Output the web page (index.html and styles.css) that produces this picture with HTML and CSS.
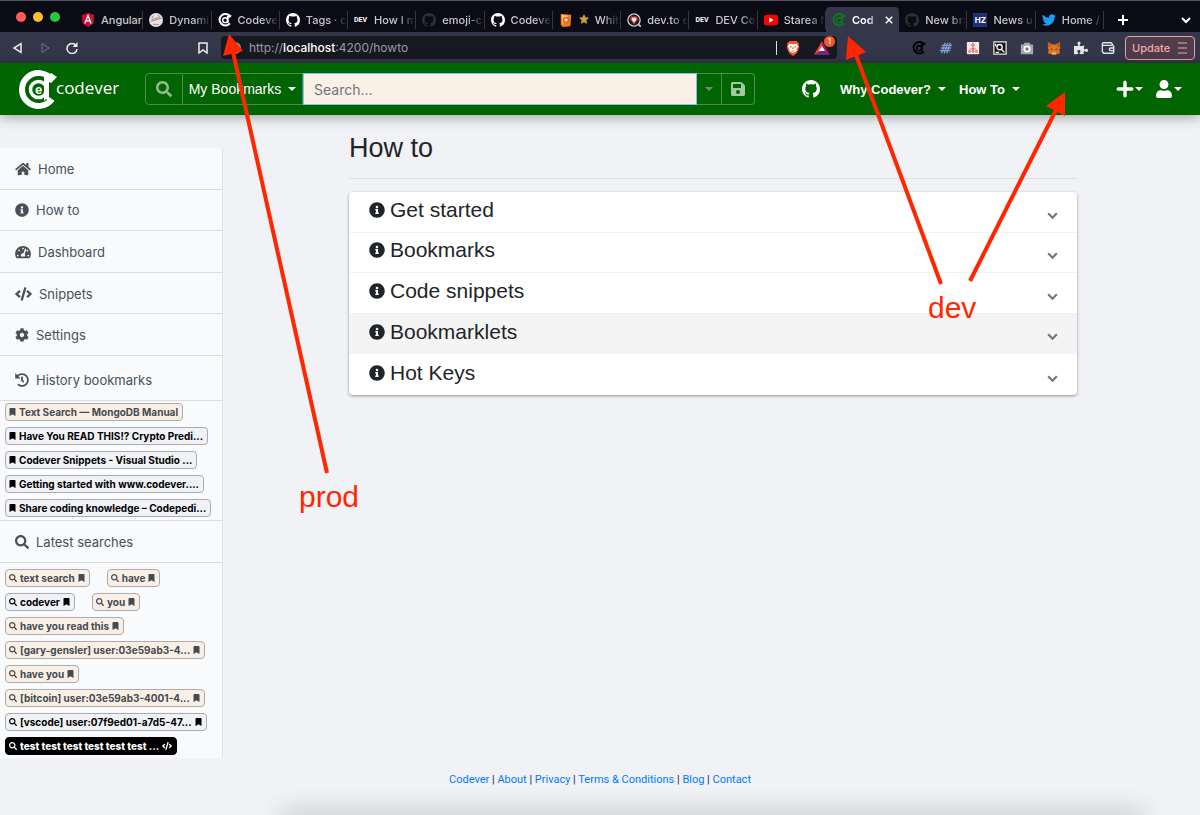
FILE: index.html
```html
<!DOCTYPE html>
<html lang="en">
<head>
<meta charset="utf-8">
<meta name="viewport" content="width=device-width, initial-scale=1">
<title>Codever - How to</title>
<link rel="stylesheet" href="styles.css">
</head>
<body>
<svg class="sprite" aria-hidden="true">
  <symbol id="home" viewBox="0 0 576 512"><path d="M280.37 148.26L96 300.11V464a16 16 0 0 0 16 16l112.06-.29a16 16 0 0 0 15.92-16V368a16 16 0 0 1 16-16h64a16 16 0 0 1 16 16v95.64a16 16 0 0 0 16 16.05L464 480a16 16 0 0 0 16-16V300L295.67 148.26a12.19 12.19 0 0 0-15.3 0zM571.6 251.47L488 182.56V44.05a12 12 0 0 0-12-12h-56a12 12 0 0 0-12 12v72.61L318.47 43a48 48 0 0 0-61 0L4.34 251.47a12 12 0 0 0-1.6 16.9l25.5 31A12 12 0 0 0 45.15 301l235.22-193.74a12.19 12.19 0 0 1 15.3 0L530.9 301a12 12 0 0 0 16.9-1.6l25.5-31a12 12 0 0 0-1.7-16.93z"/></symbol>
  <symbol id="info" viewBox="0 0 512 512"><path d="M256 8C119.043 8 8 119.083 8 256c0 136.997 111.043 248 248 248s248-111.003 248-248C504 119.083 392.957 8 256 8zm0 110c23.196 0 42 18.804 42 42s-18.804 42-42 42-42-18.804-42-42 18.804-42 42-42zm56 254c0 6.627-5.373 12-12 12h-88c-6.627 0-12-5.373-12-12v-24c0-6.627 5.373-12 12-12h12v-64h-12c-6.627 0-12-5.373-12-12v-24c0-6.627 5.373-12 12-12h64c6.627 0 12 5.373 12 12v100h12c6.627 0 12 5.373 12 12v24z"/></symbol>
  <symbol id="gauge" viewBox="0 0 576 512"><path fill-rule="evenodd" d="M288 32C129 32 0 161 0 320c0 53 14 102 39 145 6 9 16 15 27 15h444c11 0 21-6 27-15 25-43 39-92 39-145C576 161 447 32 288 32zM96 352a32 32 0 1 1 0 64 32 32 0 0 1 0-64zM144 160a32 32 0 1 1 0 64 32 32 0 0 1 0-64zM288 96a32 32 0 0 1 32 32c0 18-14 32-32 32a32 32 0 0 1 0-64zM365 128l46 14-62 190c12 12 19 30 19 52 0 12-3 22-8 32H216c-5-10-8-20-8-32 0-44 36-80 80-80 5 0 10 0 14 1zM448 176a32 32 0 1 1 0 64 32 32 0 0 1 0-64zM480 352a32 32 0 1 1 0 64 32 32 0 0 1 0-64z"/></symbol>
  <symbol id="code" viewBox="0 0 640 512"><path d="M278.9 511.5l-61-17.7c-6.4-1.8-10-8.5-8.2-14.9L346.2 8.7c1.8-6.4 8.5-10 14.9-8.2l61 17.7c6.4 1.8 10 8.5 8.2 14.9L293.8 503.3c-1.9 6.4-8.5 10.1-14.9 8.2zm-114-112.2l43.5-46.4c4.6-4.9 4.3-12.7-.8-17.2L117 256l90.6-79.7c5.1-4.5 5.5-12.3.8-17.2l-43.5-46.4c-4.5-4.8-12.1-5.1-17-.5L3.8 247.2c-5.1 4.7-5.1 12.8 0 17.5l144.1 135.1c4.9 4.6 12.5 4.4 17-.5zm327.2.6l144.1-135.1c5.1-4.7 5.1-12.8 0-17.5L492.1 112.1c-4.8-4.5-12.4-4.3-17 .5L431.6 159c-4.6 4.9-4.3 12.7.8 17.2L523 256l-90.6 79.7c-5.1 4.5-5.5 12.3-.8 17.2l43.5 46.4c4.5 4.9 12.1 5.1 17 .6z"/></symbol>
  <symbol id="cog" viewBox="0 0 512 512"><path d="M487.4 315.7l-42.6-24.6c4.3-23.2 4.3-47 0-70.2l42.6-24.6c4.9-2.8 7.1-8.6 5.5-14-11.1-35.6-30-67.8-54.7-94.6-3.8-4.1-10-5.1-14.8-2.3L380.8 110c-17.9-15.4-38.5-27.3-60.8-35.1V25.8c0-5.6-3.9-10.5-9.4-11.7-36.7-8.2-74.3-7.8-109.2 0-5.5 1.2-9.4 6.1-9.4 11.7V75c-22.2 7.9-42.8 19.8-60.8 35.1L88.7 85.5c-4.9-2.8-11-1.9-14.8 2.3-24.7 26.7-43.6 58.9-54.7 94.6-1.7 5.4.6 11.2 5.5 14L67.3 221c-4.3 23.2-4.3 47 0 70.2l-42.6 24.6c-4.9 2.8-7.1 8.6-5.5 14 11.1 35.6 30 67.8 54.7 94.6 3.8 4.1 10 5.1 14.8 2.3l42.6-24.6c17.9 15.4 38.5 27.3 60.8 35.1v49.2c0 5.6 3.9 10.5 9.4 11.7 36.7 8.2 74.3 7.8 109.2 0 5.5-1.2 9.4-6.1 9.4-11.7v-49.2c22.2-7.9 42.8-19.8 60.8-35.1l42.6 24.6c4.9 2.8 11 1.9 14.8-2.3 24.7-26.7 43.6-58.9 54.7-94.6 1.5-5.5-.7-11.3-5.6-14.1zM256 336c-44.1 0-80-35.9-80-80s35.9-80 80-80 80 35.9 80 80-35.9 80-80 80z"/></symbol>
  <symbol id="history" viewBox="0 0 512 512"><path d="M504 255.531c.253 136.64-111.18 248.372-247.82 248.468-59.015.042-113.223-20.53-155.822-54.911-11.077-8.94-11.905-25.541-1.839-35.607l11.267-11.267c8.609-8.609 22.353-9.551 31.891-1.984C173.062 425.135 212.781 440 256 440c101.705 0 184-82.311 184-184 0-101.705-82.311-184-184-184-48.814 0-93.149 18.969-126.068 49.932l50.754 50.754c10.08 10.08 2.941 27.314-11.313 27.314H24c-8.837 0-16-7.163-16-16V38.627c0-14.254 17.234-21.393 27.314-11.314l49.372 49.372C129.209 34.136 189.552 8 256 8c136.81 0 247.747 110.78 248 247.531zm-180.912 78.784l9.823-12.63c8.138-10.463 6.253-25.542-4.21-33.679L288 256.349V152c0-13.255-10.745-24-24-24h-16c-13.255 0-24 10.745-24 24v135.651l65.409 50.874c10.463 8.137 25.541 6.253 33.679-4.21z"/></symbol>
  <symbol id="search" viewBox="0 0 512 512"><path d="M505 442.7L405.3 343c-4.5-4.5-10.6-7-17-7H372c27.6-35.3 44-79.7 44-128C416 93.1 322.9 0 208 0S0 93.1 0 208s93.1 208 208 208c48.3 0 92.7-16.4 128-44v16.3c0 6.4 2.5 12.5 7 17l99.7 99.7c9.4 9.4 24.6 9.4 33.9 0l28.3-28.3c9.4-9.4 9.4-24.6.1-34zM208 336c-70.7 0-128-57.2-128-128 0-70.7 57.2-128 128-128 70.7 0 128 57.2 128 128 0 70.7-57.2 128-128 128z"/></symbol>
  <symbol id="bookmark" viewBox="0 0 384 512"><path d="M0 512V48C0 21.5 21.5 0 48 0h288c26.5 0 48 21.5 48 48v464L192 400z"/></symbol>
  <symbol id="save" viewBox="0 0 448 512"><path d="M433.941 129.941l-83.882-83.882A48 48 0 0 0 316.118 32H48C21.49 32 0 53.49 0 80v352c0 26.51 21.49 48 48 48h352c26.51 0 48-21.49 48-48V163.882a48 48 0 0 0-14.059-33.941zM224 416c-35.346 0-64-28.654-64-64 0-35.346 28.654-64 64-64s64 28.654 64 64c0 35.346-28.654 64-64 64zm96-304.52V212c0 6.627-5.373 12-12 12H76c-6.627 0-12-5.373-12-12V108c0-6.627 5.373-12 12-12h228.52c3.183 0 6.235 1.264 8.485 3.515l3.48 3.48A11.996 11.996 0 0 1 320 111.48z"/></symbol>
  <symbol id="plus" viewBox="0 0 16 16"><path d="M8 2v12M2 8h12" fill="none" stroke="currentColor" stroke-width="3" stroke-linecap="round"/></symbol>
  <symbol id="user" viewBox="0 0 448 512"><path d="M224 256c70.7 0 128-57.3 128-128S294.7 0 224 0 96 57.3 96 128s57.3 128 128 128zm89.6 32h-16.7c-22.2 10.2-46.9 16-72.9 16s-50.6-5.8-72.9-16h-16.7C60.2 288 0 348.2 0 422.4V464c0 26.5 21.5 48 48 48h352c26.5 0 48-21.5 48-48v-41.6c0-74.2-60.2-134.4-134.4-134.4z"/></symbol>
  <symbol id="github" viewBox="0 0 16 16"><path d="M8 0C3.58 0 0 3.58 0 8c0 3.54 2.29 6.53 5.47 7.59.4.07.55-.17.55-.38 0-.19-.01-.82-.01-1.49-2.01.37-2.53-.49-2.69-.94-.09-.23-.48-.94-.82-1.13-.28-.15-.68-.52-.01-.53.63-.01 1.08.58 1.23.82.72 1.21 1.87.87 2.33.66.07-.52.28-.87.51-1.07-1.78-.2-3.64-.89-3.64-3.95 0-.87.31-1.59.82-2.15-.08-.2-.36-1.02.08-2.12 0 0 .67-.21 2.2.82.64-.18 1.32-.27 2-.27s1.36.09 2 .27c1.53-1.04 2.2-.82 2.2-.82.44 1.1.16 1.92.08 2.12.51.56.82 1.27.82 2.15 0 3.07-1.87 3.75-3.65 3.95.29.25.54.73.54 1.48 0 1.07-.01 1.93-.01 2.2 0 .21.15.46.55.38A8.01 8.01 0 0 0 16 8c0-4.42-3.58-8-8-8z"/></symbol>
  <symbol id="cd" viewBox="0 0 40 40"><g fill="none" stroke="currentColor"><path d="M35 10.5A16.500 16.500 0 1 0 34 29.500" stroke-width="6"/><circle cx="20.500" cy="20.500" r="7" stroke-width="4"/><path d="M28 8v21" stroke-width="5"/></g><path d="M27 10l7-6 5 4-6 6z"/></symbol>
  <symbol id="chevron" viewBox="0 0 12 12"><path d="M2 4l4 4 4-4" fill="none" stroke="currentColor" stroke-width="2"/></symbol>
  <symbol id="lion" viewBox="0 0 16 18"><path fill="#fb542b" d="M4 1h8l3 3-.5 2 .8 2-3 7L8 18l-4.300-3-3-7 .8-2L1 4z"/><path fill="#fff" d="M4 4l4 .8L12 4l2 3-2 3 .5 2L8 15l-4.500-3L4 10 2 7z"/><path fill="#fb542b" d="M4 6.500l3 1-1.500 1.500zM12 6.500l-3 1 1.500 1.500zM7.300 8h1.400v2.500h-1.400zM5.500 11.500L8 12.500l2.500-1L8 13.500z"/></symbol>
</svg>

<header class="browser">
  <div class="tabstrip">
    <div class="lights"><i class="light light-close"></i><i class="light light-min"></i><i class="light light-max"></i></div>
    <ul class="tabs">
      <li class="tab"><svg class="fav" viewBox="0 0 16 16"><path fill="#dd0031" d="M8 0l7 2.500-1 9.500-6 4-6-4-1-9.500z"/><path fill="#b5202c" d="M8 0l7 2.500-1 9.500-6 4z"/><path fill="none" stroke="#fff" stroke-width="1.500" d="M4.500 12L8 3l3.500 9M6 9h4"/></svg><span class="tab-name">Angular</span></li>
      <li class="tab"><svg class="fav" viewBox="0 0 16 16"><circle cx="8" cy="8" r="8" fill="#e4e4e4"/><path d="M2 9.500l12-3.500M3 6l2-3M10 2.500l3 2M5 13h6" stroke="#c0645b" fill="none"/><path d="M3 7.500l9-2.500" stroke="#888"/></svg><span class="tab-name">Dynami</span></li>
      <li class="tab"><svg class="fav white"><use href="#cd"/></svg><span class="tab-name">Codeve</span></li>
      <li class="tab"><svg class="fav white"><use href="#github"/></svg><span class="tab-name">Tags · c</span></li>
      <li class="tab"><b class="fav dev">DEV</b><span class="tab-name">How I m</span></li>
      <li class="tab"><svg class="fav dim"><use href="#github"/></svg><span class="tab-name">emoji-c</span></li>
      <li class="tab"><svg class="fav white"><use href="#github"/></svg><span class="tab-name">Codeve</span></li>
      <li class="tab"><svg class="fav" viewBox="0 0 16 16"><path fill="#ef7d22" d="M2 1l12 1-1 13-9 1-2-3z"/><path fill="#ffc45c" d="M3 2l8 1-5 4-2 7z"/><circle cx="8" cy="8" r="3.500" fill="#e9501e"/><circle cx="8" cy="8" r="2" fill="#fff0c0"/></svg><span class="tab-name"><svg class="star" viewBox="0 0 16 16"><path d="M8 0l2.400 5.300 5.600.7-4.200 3.800L13 16l-5-3-5 3 1.200-6.200L0 6l5.600-.7z"/></svg> Whit</span></li>
      <li class="tab"><svg class="fav" viewBox="0 0 16 16"><circle cx="8" cy="8" r="7" fill="#17171f" stroke="#ccc" stroke-width="1.500"/><path d="M13 13l3 3" stroke="#ccc" stroke-width="2"/><path fill="#e74430" d="M4.500 4h7l.8 3L8 13 3.700 7z"/><path fill="#fff" d="M6 5.500h4L10.500 8 8 10.500 5.500 8z"/></svg><span class="tab-name">dev.to e</span></li>
      <li class="tab"><b class="fav dev">DEV</b><span class="tab-name">DEV Co</span></li>
      <li class="tab"><svg class="fav" viewBox="0 0 16 16"><rect y="2" width="16" height="12" rx="3" fill="#f00"/><path fill="#fff" d="M6 5l5 3-5 3z"/></svg><span class="tab-name">Starea N</span></li>
      <li class="tab tab-active"><svg class="fav green"><use href="#cd"/></svg><span class="tab-name">Cod</span><button class="tab-close" aria-label="Close tab"><svg viewBox="0 0 10 10"><path d="M1 1l8 8M9 1L1 9" stroke="currentColor" stroke-width="2"/></svg></button></li>
      <li class="tab"><svg class="fav dim"><use href="#github"/></svg><span class="tab-name">New bra</span></li>
      <li class="tab"><b class="fav hz">HZ</b><span class="tab-name">News u</span></li>
      <li class="tab"><svg class="fav" viewBox="0 0 24 24"><path fill="#1d9bf0" d="M23.950 4.570a10 10 0 0 1-2.820.77 4.960 4.960 0 0 0 2.160-2.720 9.900 9.900 0 0 1-3.120 1.190 4.920 4.920 0 0 0-8.390 4.480A13.930 13.930 0 0 1 1.640 3.160a4.920 4.920 0 0 0 1.520 6.570 4.900 4.900 0 0 1-2.230-.62v.06a4.920 4.920 0 0 0 3.950 4.830 4.900 4.900 0 0 1-2.210.08 4.940 4.940 0 0 0 4.600 3.420A9.870 9.870 0 0 1 0 19.540a13.940 13.940 0 0 0 7.550 2.210c9.050 0 14-7.500 14-13.980 0-.21 0-.42-.02-.63a9.940 9.940 0 0 0 2.420-2.570z"/></svg><span class="tab-name">Home /</span></li>
    </ul>
    <div class="tab-actions">
      <button aria-label="New tab"><svg class="i12" viewBox="0 0 12 12"><path d="M6 1v10M1 6h10" stroke="currentColor" stroke-width="2"/></svg></button>
      <button aria-label="List tabs"><svg class="i12"><use href="#chevron"/></svg></button>
    </div>
  </div>

  <div class="toolbar">
    <div class="history-buttons">
      <button aria-label="Back"><svg class="i12" viewBox="0 0 12 12"><path d="M9 1.500v9L2 6z" fill="none" stroke="currentColor" stroke-width="1.500"/></svg></button>
      <button class="off" aria-label="Forward"><svg class="i12" viewBox="0 0 12 12"><path d="M3 1.500v9L10 6z" fill="none" stroke="currentColor"/></svg></button>
      <button aria-label="Reload"><svg class="i12" viewBox="0 0 12 12"><path d="M10 3.500A5 5 0 1 0 11 7" fill="none" stroke="currentColor" stroke-width="1.500"/><path d="M11.500 0v5h-5z" fill="currentColor"/></svg></button>
    </div>
    <button aria-label="Bookmark page"><svg class="i12" viewBox="0 0 12 12"><path d="M2 1h8v10L6 8l-4 3z" fill="none" stroke="currentColor" stroke-width="1.500"/></svg></button>
    <div class="address">
      <svg class="globe" viewBox="0 0 12 12"><circle cx="6" cy="6" r="6"/></svg>
      <span class="url">http://<b>localhost</b>:4200/howto</span>
      <i class="bar"></i>
      <svg class="shield"><use href="#lion"/></svg>
      <span class="bat"><svg class="i16" viewBox="0 0 16 16"><path fill="#ff4724" d="M8 1L0 15l8-4z"/><path fill="#9e1f63" d="M8 1l8 14-8-4z"/><path fill="#662d91" d="M0 15h16l-8-5z"/><path fill="#fff" d="M8 6l3 5H5z"/></svg><em>1</em></span>
    </div>
    <div class="extensions">
      <svg class="i14 black"><use href="#cd"/></svg>
      <svg class="i14" viewBox="0 0 16 16"><path d="M7 2L3 14M10 2L6 14M13 2L9 14M3 5h12M2 8h12M1 11h12" stroke="#7ea0d8" stroke-width="1.500" fill="none"/></svg>
      <svg class="i14" viewBox="0 0 16 16"><rect x="1" y="1" width="14" height="14" rx="1" fill="#f6e9e9"/><g fill="none" stroke="#e8433f"><circle cx="8" cy="4.500" r="1.500"/><path d="M8 6v5M4 11c0-3 8-3 8 0"/><circle cx="4" cy="12" r="1"/><circle cx="8" cy="12" r="1"/><circle cx="12" cy="12" r="1"/></g></svg>
      <svg class="i14" viewBox="0 0 16 16"><rect x="1" y="1" width="14" height="14" fill="#15151c" stroke="#ddd" stroke-width="1.500"/><circle cx="7.500" cy="7" r="3" fill="none" stroke="#fff" stroke-width="1.500"/><path d="M10 10l3 3M3 13h4M3 3v3" stroke="#fff" stroke-width="1.500"/></svg>
      <svg class="i14" viewBox="0 0 16 16"><path fill="#a6a8a9" d="M1 4h3l1-2h6l1 2h3v11H1z"/><circle cx="8" cy="9" r="3" fill="#777" stroke="#fff" stroke-width="2"/></svg>
      <svg class="i14" viewBox="0 0 16 16"><path fill="#e2761b" d="M1 1l5 3h4l5-3v7l-1 2 1 4-4 1-1 1H6l-1-1-4-1 1-4-1-2z"/><path fill="#b5551a" d="M1 1l4 5-3 1zM15 1l-4 5 3 1z"/><path fill="#d9c6b2" d="M6 13h4v2H6z"/><path fill="#233447" d="M4 8l3 2H5zM12 8l-3 2h2z"/></svg>
      <svg class="i14 pale" viewBox="0 0 576 512"><path d="M519.442 288.651c-41.519 0-59.500 31.593-82.058 31.593C377.409 320.244 432 144 432 144s-196.288 80-196.288-3.297c0-35.827 36.288-46.250 36.288-85.985C272 19.216 243.885 0 210.539 0c-34.654 0-66.366 18.891-66.366 56.346 0 41.364 31.711 59.277 31.711 81.750C175.885 207.719 0 166.758 0 166.758v333.237s178.635 41.047 178.635-28.662c0-22.473-40-40.107-40-81.471 0-37.456 29.250-56.346 63.577-56.346 33.673 0 61.788 19.216 61.788 54.717 0 39.735-36.288 50.158-36.288 85.985 0 60.803 129.675 25.730 181.230 25.730 0 0-34.725-120.101 25.827-120.101 35.962 0 46.423 36.152 86.308 36.152C556.712 416 576 387.990 576 354.443c0-34.199-18.962-65.792-56.558-65.792z"/></svg>
      <svg class="i14" viewBox="0 0 16 16"><g fill="none" stroke="#e6e6ea" stroke-width="1.500"><path d="M13 5V3.500L11.500 2H3a1.500 1.500 0 0 0 0 3h10.500l1 1v7l-1 1H3L1.500 12V3"/><path d="M15 8h-4a1.500 1.500 0 0 0 0 3h4"/></g></svg>
    </div>
    <button class="update">Update<svg class="i12" viewBox="0 0 12 12"><path d="M2 1h9M2 6h9M2 11h9" stroke="currentColor" stroke-width="1"/></svg></button>
  </div>
</header>

<nav class="navbar">
  <a class="brand" href="#"><svg class="logo" viewBox="0 0 40 40"><g fill="none" stroke="currentColor"><path d="M34 11A16.500 16.500 0 1 0 34 30" stroke-width="6"/><circle cx="20.500" cy="20.500" r="8" stroke-width="3.500"/><path d="M28.500 7v21" stroke-width="5"/></g><path d="M26 10l7-6 6 4-6 6zM26 27h5v5l-3-2-2 2z"/><text x="20.500" y="25" text-anchor="middle">e</text></svg><span>codever</span></a>
  <form class="searchbox">
    <button class="addon" type="button" aria-label="Search"><svg class="i16"><use href="#search"/></svg></button>
    <button class="scope" type="button">My Bookmarks<i class="caret"></i></button>
    <input type="search" placeholder="Search..." aria-label="Search bookmarks">
    <button class="drop" type="button" aria-label="Search options"><i class="caret"></i></button>
    <button class="addon-end" type="button" aria-label="Save search"><svg class="i14"><use href="#save"/></svg></button>
  </form>
  <div class="links">
    <a href="#" aria-label="GitHub"><svg class="i18"><use href="#github"/></svg></a>
    <a href="#">Why Codever?<i class="caret"></i></a>
    <a href="#">How To<i class="caret"></i></a>
  </div>
  <div class="account">
    <button aria-label="Add"><svg class="i18"><use href="#plus"/></svg><i class="caret"></i></button>
    <button aria-label="Account"><svg class="i18"><use href="#user"/></svg><i class="caret"></i></button>
  </div>
</nav>

<div class="layout">
  <aside class="sidebar">
    <nav class="menu">
      <a href="#"><svg class="wide"><use href="#home"/></svg>Home</a>
      <a href="#"><svg><use href="#info"/></svg>How to</a>
      <a href="#"><svg class="wide"><use href="#gauge"/></svg>Dashboard</a>
      <a href="#"><svg class="wider"><use href="#code"/></svg>Snippets</a>
      <a href="#"><svg><use href="#cog"/></svg>Settings</a>
    </nav>
    <h2 class="side-title side-title-tall"><svg><use href="#history"/></svg>History bookmarks</h2>
    <div class="badges">
      <a class="badge visited" href="#"><svg><use href="#bookmark"/></svg>Text Search — MongoDB Manual</a>
      <a class="badge" href="#"><svg><use href="#bookmark"/></svg>Have You READ THIS!? Crypto Predi...</a>
      <a class="badge" href="#"><svg><use href="#bookmark"/></svg>Codever Snippets - Visual Studio ...</a>
      <a class="badge" href="#"><svg><use href="#bookmark"/></svg>Getting started with www.codever....</a>
      <a class="badge" href="#"><svg><use href="#bookmark"/></svg>Share coding knowledge – Codepedi...</a>
    </div>
    <h2 class="side-title"><svg><use href="#search"/></svg>Latest searches</h2>
    <div class="badges searches">
      <a class="badge visited" href="#"><svg><use href="#search"/></svg>text search<svg><use href="#bookmark"/></svg></a>
      <a class="badge visited" href="#"><svg><use href="#search"/></svg>have<svg><use href="#bookmark"/></svg></a>
      <a class="badge" href="#"><svg><use href="#search"/></svg>codever<svg><use href="#bookmark"/></svg></a>
      <a class="badge visited" href="#"><svg><use href="#search"/></svg>you<svg><use href="#bookmark"/></svg></a>
      <a class="badge visited" href="#"><svg><use href="#search"/></svg>have you read this<svg><use href="#bookmark"/></svg></a>
      <a class="badge visited" href="#"><svg><use href="#search"/></svg>[gary-gensler] user:03e59ab3-4...<svg><use href="#bookmark"/></svg></a>
      <a class="badge visited" href="#"><svg><use href="#search"/></svg>have you<svg><use href="#bookmark"/></svg></a>
      <a class="badge visited" href="#"><svg><use href="#search"/></svg>[bitcoin] user:03e59ab3-4001-4...<svg><use href="#bookmark"/></svg></a>
      <a class="badge" href="#"><svg><use href="#search"/></svg>[vscode] user:07f9ed01-a7d5-47...<svg><use href="#bookmark"/></svg></a>
      <a class="badge dark" href="#"><svg><use href="#search"/></svg>test test test test test test ...<svg class="codeicon"><use href="#code"/></svg></a>
    </div>
  </aside>
  <main class="content">
    <h1>How to</h1>
    <div class="accordion">
      <button><svg class="i16"><use href="#info"/></svg><span>Get started</span><svg class="arrow"><use href="#chevron"/></svg></button>
      <button><svg class="i16"><use href="#info"/></svg><span>Bookmarks</span><svg class="arrow"><use href="#chevron"/></svg></button>
      <button><svg class="i16"><use href="#info"/></svg><span>Code snippets</span><svg class="arrow"><use href="#chevron"/></svg></button>
      <button class="hovered"><svg class="i16"><use href="#info"/></svg><span>Bookmarklets</span><svg class="arrow"><use href="#chevron"/></svg></button>
      <button><svg class="i16"><use href="#info"/></svg><span>Hot Keys</span><svg class="arrow"><use href="#chevron"/></svg></button>
    </div>
  </main>
</div>

<footer class="footer"><a href="#">Codever</a> | <a href="#">About</a> | <a href="#">Privacy</a> | <a href="#">Terms &amp; Conditions</a> | <a href="#">Blog</a> | <a href="#">Contact</a></footer>
<div class="edge-shadow"></div>

<svg class="annotations" aria-label="prod and dev annotations">
  <g stroke-width="4"><path d="M327 473L233 52"/><path d="M941 284L856 55"/><path d="M970 281L1056 110"/></g>
  <path d="M229 34l14 17-20 5zM848 36l18 16-20 8zM1065 92v24l-19-10z"/>
  <text x="299" y="507">prod</text>
  <text x="928" y="318">dev</text>
</svg>
</body>
</html>
```
FILE: styles.css
```css
* { box-sizing: border-box; }

body {
  margin: 0;
  min-height: 100vh;
  position: relative;
  overflow: hidden;
  display: flex;
  flex-direction: column;
  background: #f0f2f6;
  color: #212529;
  font-family: Inter, "Liberation Sans", sans-serif;
}

button {
  margin: 0;
  padding: 0;
  border: 0;
  background: none;
  color: inherit;
  font: inherit;
  cursor: pointer;
}

a { color: inherit; text-decoration: none; }
svg { display: block; flex: none; fill: currentColor; }

.sprite { position: absolute; width: 0; height: 0; }
.i12 { width: 12px; height: 12px; }
.i14 { width: 14px; height: 16px; }
.i16 { width: 16px; height: 16px; }
.i18 { width: 18px; height: 18px; }
.black { color: #000; }
.pale { color: #e6e6ea; }

/* Browser chrome */
.tabstrip {
  display: flex;
  align-items: flex-end;
  height: 32px;
  border-top: 1px solid #55565e;
  background: #0b0b15;
  color: #c9c9cd;
}

.lights { display: flex; gap: 7px; width: 75px; padding: 0 0 10px 16px; }
.light { width: 10px; height: 10px; border-radius: 50%; }
.light-close { background: #ff5f57; }
.light-min { background: #febc2e; }
.light-max { background: #28c840; }

.tabs {
  display: flex;
  flex: 1;
  min-width: 0;
  height: 25px;
  margin: 0;
  padding: 0;
  list-style: none;
}

.tab {
  display: flex;
  flex: 1 1 0;
  align-items: center;
  gap: 6px;
  min-width: 0;
  padding: 0 1px 0 6px;
  background: linear-gradient(#38383c, #38383c) right center / 1px 18px no-repeat;
  font-size: 11px;
  font-weight: 500;
}

.tab-active { padding-right: 6px; border-radius: 4px 4px 0 0; background: #34364a; color: #fff; font-weight: 600; }
.tab-name {
  flex: 1;
  min-width: 0;
  overflow: hidden;
  white-space: nowrap;
  -webkit-mask-image: linear-gradient(90deg, #000 60%, transparent);
  mask-image: linear-gradient(90deg, #000 60%, transparent);
}
.tab:first-child .tab-name { -webkit-mask-image: none; mask-image: none; }
.tab-close { width: 8px; height: 8px; }
.tab-close svg { width: 8px; height: 8px; }
.fav { flex: none; width: 14px; height: 14px; }
.white { color: #fff; }
.dim { color: #2b2f36; }
.green { color: #0a7a1d; }
.dev { color: #fff; font: 700 7px/14px Roboto, sans-serif; }
.hz { background: #1f2f7a; color: #fff; font: 700 8px/14px Inter, sans-serif; text-align: center; }
.star { display: inline-block; width: 10px; height: 10px; margin-right: 3px; color: #c7a334; }

.tab-actions {
  display: flex;
  justify-content: space-between;
  width: 96px;
  padding: 0 8px 6px 13px;
  color: #fff;
}

.toolbar {
  display: flex;
  align-items: center;
  height: 31px;
  padding: 0 5px 0 12px;
  background: #34364a;
  color: #eee;
}

.history-buttons { display: flex; gap: 15px; width: 185px; }
.off { color: #72748a; }

.address {
  display: flex;
  flex: 1;
  align-items: center;
  height: 23px;
  margin-left: 12px;
  padding: 0 2px 0 8px;
  border-radius: 4px;
  background: #171920;
  color: #9a9ba3;
  font-size: 12px;
}
.globe { width: 12px; height: 12px; color: #8c8d96; }
.url { margin-left: 8px; white-space: nowrap; }
.url b { color: #fff; font-weight: 500; }
.bar { width: 1px; height: 14px; margin-left: auto; background: #ddd; }
.shield { width: 14px; height: 16px; margin: 0 14px 0 9px; }
.bat { display: flex; position: relative; width: 21px; }
.bat em {
  position: absolute;
  top: -4px;
  right: 0;
  width: 11px;
  height: 11px;
  border-radius: 50%;
  background: #fb542b;
  color: #fff;
  font: 500 8px/11px Inter, sans-serif;
  text-align: center;
}

.extensions { display: flex; gap: 13px; margin: 0 10px 0 75px; }
.update {
  display: flex;
  align-items: center;
  justify-content: space-between;
  width: 70px;
  height: 24px;
  padding: 0 6px;
  border: 1px solid #f0a0a0;
  border-radius: 4px;
  background: #4e3d4d;
  color: #f5a5a5;
  font-size: 11px;
  font-weight: 500;
}

/* Site header */
.navbar {
  display: flex;
  align-items: center;
  position: relative;
  height: 52px;
  padding: 0 18px;
  background: #006400;
  box-shadow: 0 2px 12px rgba(0, 0, 0, 0.35);
  color: #fff;
  font-size: 14px;
}

.brand { display: flex; align-items: center; width: 127px; font-size: 17px; }
.brand span { margin-left: -2px; padding-bottom: 4px; font-family: "Open Sans", sans-serif; font-weight: 500; }
.logo { width: 40px; height: 40px; }
.logo text { font: 700 13px "Liberation Sans", sans-serif; }

.caret {
  display: inline-block;
  border: 4px solid transparent;
  border-top-color: currentColor;
  border-bottom: 0;
}

.searchbox { display: flex; flex: 1; max-width: 610px; height: 32px; }
.searchbox > * { border: 1px solid #4e8a4e; border-left-width: 0; }
.addon { display: grid; place-items: center; width: 38px; border-left-width: 1px; border-radius: 4px 0 0 4px; color: #8fbc8f; }
.scope { width: 120px; font-family: "Liberation Sans", sans-serif; font-size: 14px; white-space: nowrap; }
.scope .caret { margin-left: 7px; vertical-align: 3px; }
.searchbox input {
  flex: 1;
  min-width: 0;
  margin: 0;
  padding: 0 10px;
  border: 1px solid #80bdff;
  border-radius: 0;
  background: #faf0e6;
  font: 14px Inter, sans-serif;
  outline: 0;
}
.searchbox input::placeholder { color: #6c757d; }
.drop { display: grid; place-items: center; width: 25px; color: #6c8f78; }
.addon-end { display: grid; place-items: center; width: 33px; border-radius: 0 4px 4px 0; color: #a3c8a3; }

.links { display: flex; align-items: center; gap: 13px; margin-left: 47px; font-family: "Liberation Sans", sans-serif; font-size: 13px; font-weight: 700; white-space: nowrap; }
.links a:first-child { margin-right: 7px; }
.links .caret { margin-left: 7px; vertical-align: 3px; }
.account { display: flex; gap: 12px; margin-left: auto; }
.account button { display: flex; align-items: center; gap: 1px; }

/* Page body */
.layout {
  display: grid;
  grid-template-columns: 223px minmax(0, 1fr);
  gap: 3px;
}

.sidebar {
  margin-top: 33px;
  border-right: 1px solid #dfe2e6;
  background: #f8fafb;
  color: #495057;
  font-size: 13px;
}

.menu { display: grid; grid-auto-rows: 1fr; min-height: 208px; }
.menu a, .side-title {
  display: flex;
  align-items: center;
  gap: 7px;
  padding: 1px 15px 0;
  border-bottom: 1px solid #d9dcdf;
}
.menu svg, .side-title svg { width: 14px; height: 14px; }
.menu .wide { width: 16px; }
.menu .wider { width: 17px; }
.side-title { height: 42px; margin: 0; font-size: 13px; font-weight: 400; }
.side-title-tall { height: 45px; padding-top: 4px; }

.badges {
  display: flex;
  flex-direction: column;
  align-items: flex-start;
  gap: 6px;
  min-height: 120px;
  padding: 2px 4px 3px 5px;
  border-bottom: 1px solid #d9dcdf;
}
.searches { flex-flow: row wrap; column-gap: 17px; padding: 6px 4px 3px 5px; border: 0; }

.badge {
  display: flex;
  align-items: center;
  gap: 3px;
  height: 18px;
  padding: 0 4px 0 3px;
  border: 1px solid #a9abb0;
  border-radius: 4px;
  background: #f0f2f6;
  color: #000;
  font-size: 10px;
  font-weight: 700;
  white-space: nowrap;
}
.badge svg { width: 7px; height: 8px; }
.searches .badge svg:first-child { width: 8px; }
.visited { background: #faefe4; color: #454a50; }
.dark { border-color: #000; background: #000; color: #fff; font-weight: 800; }
.badge .codeicon { width: 10px; }

.content { width: 100%; max-width: 728px; margin: 0 auto; font-family: "Liberation Sans", sans-serif; }
.content h1 {
  margin: 0 0 13px;
  padding: 17px 0 13px;
  border-bottom: 1px solid #dddfe3;
  font-size: 27px;
  font-weight: 400;
  line-height: 33px;
}

.accordion {
  display: grid;
  grid-auto-rows: 1fr;
  min-height: 203px;
  overflow: hidden;
  border-radius: 4px;
  background: #fff;
  box-shadow: 0 1px 3px rgba(0, 0, 0, 0.4);
}
.accordion button {
  display: flex;
  align-items: center;
  gap: 5px;
  padding: 0 18px 4px 20px;
  border-bottom: 1px solid #f2f2f2;
  font-size: 21px;
  text-align: left;
}
.accordion span { flex: 1; }
.accordion .hovered { background: #f4f4f4; }
.accordion .arrow { align-self: flex-end; width: 13px; height: 13px; margin-bottom: 6px; color: #757575; }
.accordion button:last-child { border-bottom: 0; }

.footer { padding: 14px 0; font-family: Roboto, sans-serif; font-size: 11px; line-height: 16px; text-align: center; }
.footer a { color: #007bff; }
.edge-shadow { height: 1px; margin: auto 60px -3px 285px; box-shadow: 0 0 24px 4px rgba(0, 0, 0, 0.3); }

/* Markup drawn over the window */
.annotations { position: absolute; top: 0; left: 0; width: 100%; height: 100%; fill: #ff2600; stroke: none; pointer-events: none; }
.annotations g { stroke: #ff2600; }
.annotations text { font: 30px "Liberation Sans", sans-serif; }
```
